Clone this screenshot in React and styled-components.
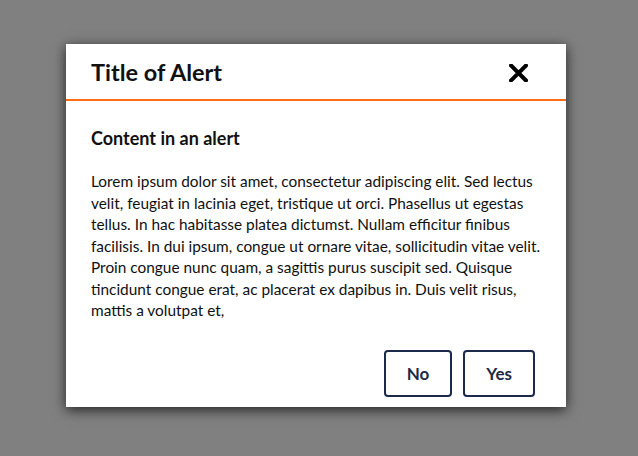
import React from 'react';
import styled, { createGlobalStyle } from 'styled-components';

const GlobalStyle = createGlobalStyle`
  html, body {
    margin: 0;
    padding: 0;
    background: #808080;
    font-family: Lato, "Open Sans", sans-serif;
  }
`;

const lines = [
  'Lorem ipsum dolor sit amet, consectetur adipiscing elit. Sed lectus',
  'velit, feugiat in lacinia eget, tristique ut orci. Phasellus ut egestas',
  'tellus. In hac habitasse platea dictumst. Nullam efficitur finibus',
  'facilisis. In dui ipsum, congue ut ornare vitae, sollicitudin vitae velit.',
  'Proin congue nunc quam, a sagittis purus suscipit sed. Quisque',
  'tincidunt congue erat, ac placerat ex dapibus in. Duis velit risus,',
  'mattis a volutpat et,',
];

const App = () => {
  return (
    <>
      <GlobalStyle />
      <Overlay>
        <Dialog role="alertdialog">
          <Header>
            <Title>Title of Alert</Title>
            <CloseButton aria-label="Close">
              <svg width="19" height="18" viewBox="0 0 19 18">
                <path
                  d="M2 1.5 L17 16.5 M17 1.5 L2 16.5"
                  stroke="#000"
                  strokeWidth="4"
                  strokeLinecap="square"
                />
              </svg>
            </CloseButton>
          </Header>
          <Body>
            <Subtitle>Content in an alert</Subtitle>
            <Text>
              {lines.map((l, i) => (
                <React.Fragment key={i}>
                  {l}
                  {i < lines.length - 1 && <br />}
                </React.Fragment>
              ))}
            </Text>
          </Body>
          <Footer>
            <ActionButton>No</ActionButton>
            <ActionButton>Yes</ActionButton>
          </Footer>
        </Dialog>
      </Overlay>
    </>
  );
};
export default App;

const Overlay = styled.div`
  width: 638px;
  height: 456px;
  display: flex;
  padding: 44px 0 0 66px;
  box-sizing: border-box;
`;

const Dialog = styled.div`
  width: 500px;
  height: 363px;
  background: #fff;
  box-shadow: 0 3px 12px rgba(0, 0, 0, 0.75);
  display: flex;
  flex-direction: column;
`;

const Header = styled.div`
  height: 55px;
  display: flex;
  align-items: center;
  justify-content: space-between;
  padding: 0 38px 0 25px;
  border-bottom: 2px solid #ff6c17;
`;

const Title = styled.h1`
  margin: 0;
  font-size: 23.5px;
  font-weight: 700;
  color: #111;
`;

const CloseButton = styled.button`
  border: none;
  background: none;
  padding: 0;
  margin-top: 2px;
  display: flex;
  cursor: pointer;
`;

const Body = styled.div`
  padding: 26px 25px 0;
  flex: 1;
`;

const Subtitle = styled.h2`
  margin: 0 0 22px;
  font-size: 18px;
  font-weight: 700;
  color: #111;
`;

const Text = styled.p`
  margin: 0;
  font-size: 15.4px;
  line-height: 21.5px;
  color: #111;
  white-space: nowrap;
`;

const Footer = styled.div`
  display: flex;
  justify-content: flex-end;
  gap: 11px;
  padding: 0 31px 10px;
`;

const ActionButton = styled.button`
  min-width: 66px;
  height: 47px;
  padding: 0 21px;
  background: #fff;
  border: 2px solid #1b2a4a;
  border-radius: 4px;
  color: #1b2a4a;
  font-family: Lato, sans-serif;
  font-size: 17px;
  font-weight: 700;
  cursor: pointer;
`;
